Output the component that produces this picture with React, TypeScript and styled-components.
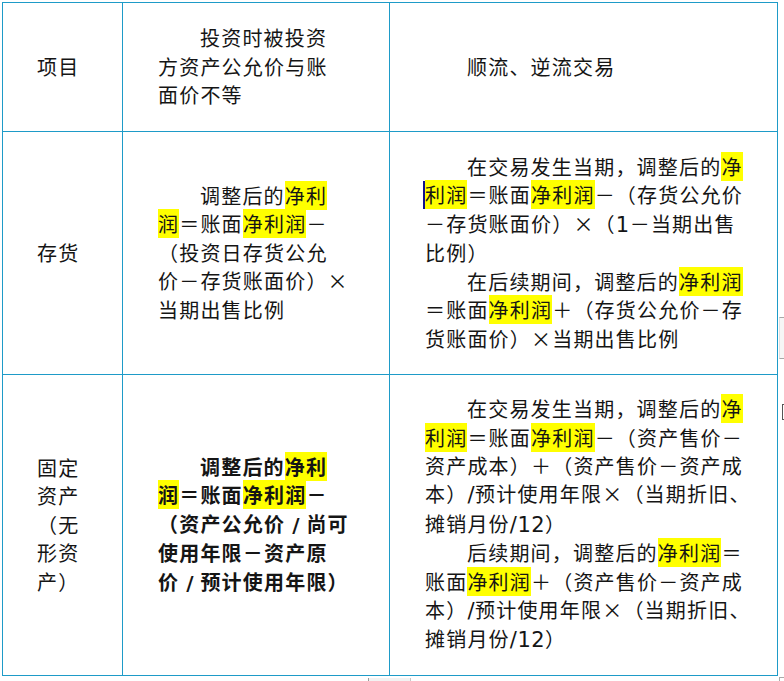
import React from 'react';
import styled, { createGlobalStyle } from 'styled-components';

const GlobalStyle = createGlobalStyle`
    html, body {
        margin: 0;
        padding: 0;
        background: #ffffff;
    }
    #root {
        width: 784px;
        height: 681px;
    }
`;

const Page = styled.div`
    position: relative;
    width: 784px;
    height: 681px;
    padding: 2px;
    box-sizing: border-box;
    overflow: hidden;
    background: #ffffff;
    font-family: "Noto Sans CJK SC", "Noto Sans", sans-serif;
    font-size: 20px;
    letter-spacing: 1.2px;
    line-height: 28.4px;
    color: #151515;
`;

// table lines are the grid background showing through 1px gaps
const Sheet = styled.div`
    display: grid;
    grid-template-columns: 119px 266px 387px;
    grid-template-rows: 128px 242px 300px;
    gap: 1px;
    padding: 1px;
    width: max-content;
    background: #1e9bc8;
`;

const Cell = styled.div<{ $bold?: boolean; $pad?: number }>`
    display: flex;
    flex-direction: column;
    justify-content: center;
    padding-left: ${(p) => p.$pad ?? 35}px;
    background: #ffffff;
    font-weight: ${(p) => (p.$bold ? 700 : 400)};
`;

const Para = styled.p<{ $indent?: boolean }>`
    margin: 0;
    white-space: nowrap;
    text-indent: ${(p) => (p.$indent ? '42px' : '0')};
`;

const Mark = styled.span`
    background: #ffff00;
`;

const Num = styled.span`
    font-family: "DejaVu Sans", "Liberation Sans", sans-serif;
    font-size: 21px;
    letter-spacing: 0.5px;
`;

// full-width slot holding a short heavy slash, as in the bold cell
const Slash = styled.span`
    display: inline-block;
    width: 21.2px;
    text-indent: 0;
    text-align: center;
    font-family: "DejaVu Sans", "Liberation Sans", sans-serif;
    font-weight: 700;
    letter-spacing: 0;
`;

const Caret = styled.span`
    display: inline-block;
    width: 2px;
    height: 28px;
    margin-left: -2px;
    vertical-align: text-bottom;
    background: #12128a;
`;

// little bits of the editor chrome peeking in at the page edges
const EdgeBox = styled.div`
    position: absolute;
    left: 779px;
    top: 317px;
    width: 10px;
    height: 40px;
    border-top: 1px solid #a8a8a8;
    border-bottom: 1px solid #a8a8a8;
    border-left: 1px solid #e2e2e2;
    background: #f6f6f6;
`;

const EdgeBracket = styled.div`
    position: absolute;
    left: 782px;
    top: 404px;
    width: 4px;
    height: 14px;
    border: 1px solid #555;
    border-right: none;
`;

const FootTab = styled.div`
    position: absolute;
    left: 368px;
    top: 678px;
    width: 41px;
    height: 8px;
    border-left: 1px solid #9a9a9a;
    border-right: 1px solid #c8c8c8;
    background: #f3f3f3;
`;

const FootCorner = styled.div`
    position: absolute;
    left: 779px;
    top: 677px;
    width: 8px;
    height: 8px;
    border-left: 1px solid #aaaaaa;
    border-top: 1px solid #aaaaaa;
`;

function App() {
    return (
        <>
            <GlobalStyle />
            <Page>
                <Sheet>
                    {/* header */}
                    <Cell $pad={34}>
                        <Para>项目</Para>
                    </Cell>
                    <Cell>
                        <Para $indent>
                            投资时被投资
                            <br />
                            方资产公允价与账
                            <br />
                            面价不等
                        </Para>
                    </Cell>
                    <Cell>
                        <Para $indent>顺流、逆流交易</Para>
                    </Cell>

                    {/* 存货 */}
                    <Cell $pad={34}>
                        <Para>存货</Para>
                    </Cell>
                    <Cell>
                        <Para $indent>
                            调整后的<Mark>净利</Mark>
                            <br />
                            <Mark>润</Mark>＝账面<Mark>净利润</Mark>－
                            <br />
                            （投资日存货公允
                            <br />
                            价－存货账面价）×
                            <br />
                            当期出售比例
                        </Para>
                    </Cell>
                    <Cell>
                        <Para $indent>
                            在交易发生当期，调整后的<Mark>净</Mark>
                            <br />
                            <Caret />
                            <Mark>利润</Mark>＝账面<Mark>净利润</Mark>－（存货公允价
                            <br />
                            －存货账面价）×（<Num>1</Num>－当期出售
                            <br />
                            比例）
                        </Para>
                        <Para $indent>
                            在后续期间，调整后的<Mark>净利润</Mark>
                            <br />
                            ＝账面<Mark>净利润</Mark>＋（存货公允价－存
                            <br />
                            货账面价）×当期出售比例
                        </Para>
                    </Cell>

                    {/* 固定资产 */}
                    <Cell $pad={34}>
                        <Para>
                            固定
                            <br />
                            资产
                            <br />
                            （无
                            <br />
                            形资
                            <br />
                            产）
                        </Para>
                    </Cell>
                    <Cell $bold>
                        <Para $indent>
                            调整后的<Mark>净利</Mark>
                            <br />
                            <Mark>润</Mark>＝账面<Mark>净利润</Mark>－
                            <br />
                            （资产公允价<Slash>/</Slash>尚可
                            <br />
                            使用年限－资产原
                            <br />
                            价<Slash>/</Slash>预计使用年限）
                        </Para>
                    </Cell>
                    <Cell>
                        <Para $indent>
                            在交易发生当期，调整后的<Mark>净</Mark>
                            <br />
                            <Mark>利润</Mark>＝账面<Mark>净利润</Mark>－（资产售价－
                            <br />
                            资产成本）＋（资产售价－资产成
                            <br />
                            本）<Num>/</Num>预计使用年限×（当期折旧、
                            <br />
                            摊销月份<Num>/12</Num>）
                        </Para>
                        <Para $indent>
                            后续期间，调整后的<Mark>净利润</Mark>＝
                            <br />
                            账面<Mark>净利润</Mark>＋（资产售价－资产成
                            <br />
                            本）<Num>/</Num>预计使用年限×（当期折旧、
                            <br />
                            摊销月份<Num>/12</Num>）
                        </Para>
                    </Cell>
                </Sheet>
                <EdgeBox />
                <EdgeBracket />
                <FootTab />
                <FootCorner />
            </Page>
        </>
    );
}

export default App;
